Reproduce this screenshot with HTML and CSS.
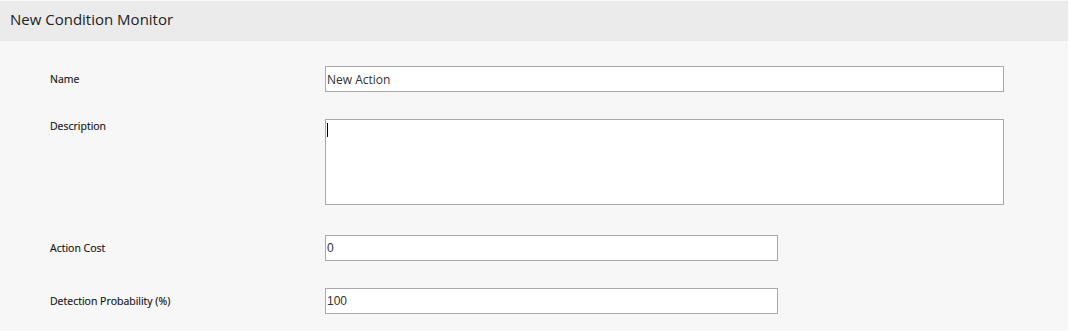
FILE: index.html
```html
<!DOCTYPE html>
<html>
<head>
<meta charset="utf-8">
<link rel="stylesheet" href="styles.css">
</head>
<body>
<div class="page">
  <div class="header">New Condition Monitor</div>
  <div class="form">
    <div class="row">
      <label class="label">Name</label>
      <div class="field"><input class="input wide" type="text" value="New Action"></div>
    </div>
    <div class="row row-top">
      <label class="label">Description</label>
      <div class="field caret-wrap"><textarea class="textarea"></textarea><span class="caret"></span></div>
    </div>
    <div class="row">
      <label class="label">Action Cost</label>
      <div class="field"><input class="input narrow num" type="text" value="0"></div>
    </div>
    <div class="row">
      <label class="label">Detection Probability (%)</label>
      <div class="field"><input class="input narrow num" type="text" value="100"></div>
    </div>
  </div>
</div>
</body>
</html>
```
FILE: styles.css
```css
html, body {
  margin: 0;
  padding: 0;
  background: #ffffff;
}
.page {
  width: 1068px;
  height: 331px;
  background: #f7f7f7;
  font-family: "Open Sans", "Liberation Sans", sans-serif;
  color: #222;
  overflow: hidden;
}
.header {
  margin-top: 1px;
  height: 40px;
  background: #ebebeb;
  padding-left: 10px;
  font-size: 15px;
  line-height: 36px;
  color: #222;
}
.form {
  padding: 25px 0 0 50px;
  display: flex;
  flex-direction: column;
  gap: 27px;
}
.row {
  display: grid;
  grid-template-columns: 275px 1fr;
  align-items: center;
}
.row-top {
  align-items: start;
  margin-bottom: 3px;
}
.label {
  font-size: 10.5px;
  font-weight: 400;
  color: #111;
  line-height: 14px;
  -webkit-text-stroke: 0.15px #111;
}
.field {
  display: flex;
}
.caret-wrap {
  position: relative;
}
.input, .textarea {
  box-sizing: border-box;
  margin: 0;
  border: 1px solid #a9a9a9;
  background: #fff;
  padding: 0 1px;
  font-family: "Open Sans", sans-serif;
  font-size: 12px;
  color: #333;
  outline: none;
}
.input {
  height: 26px;
}
.wide {
  width: 679px;
}
.narrow {
  width: 453px;
}
.num {
  font-family: "Liberation Sans", Arial, sans-serif;
}
.textarea {
  width: 679px;
  height: 86px;
  resize: none;
  display: block;
}
.caret {
  position: absolute;
  left: 2px;
  top: 4px;
  width: 1px;
  height: 14px;
  background: #000;
}
```
